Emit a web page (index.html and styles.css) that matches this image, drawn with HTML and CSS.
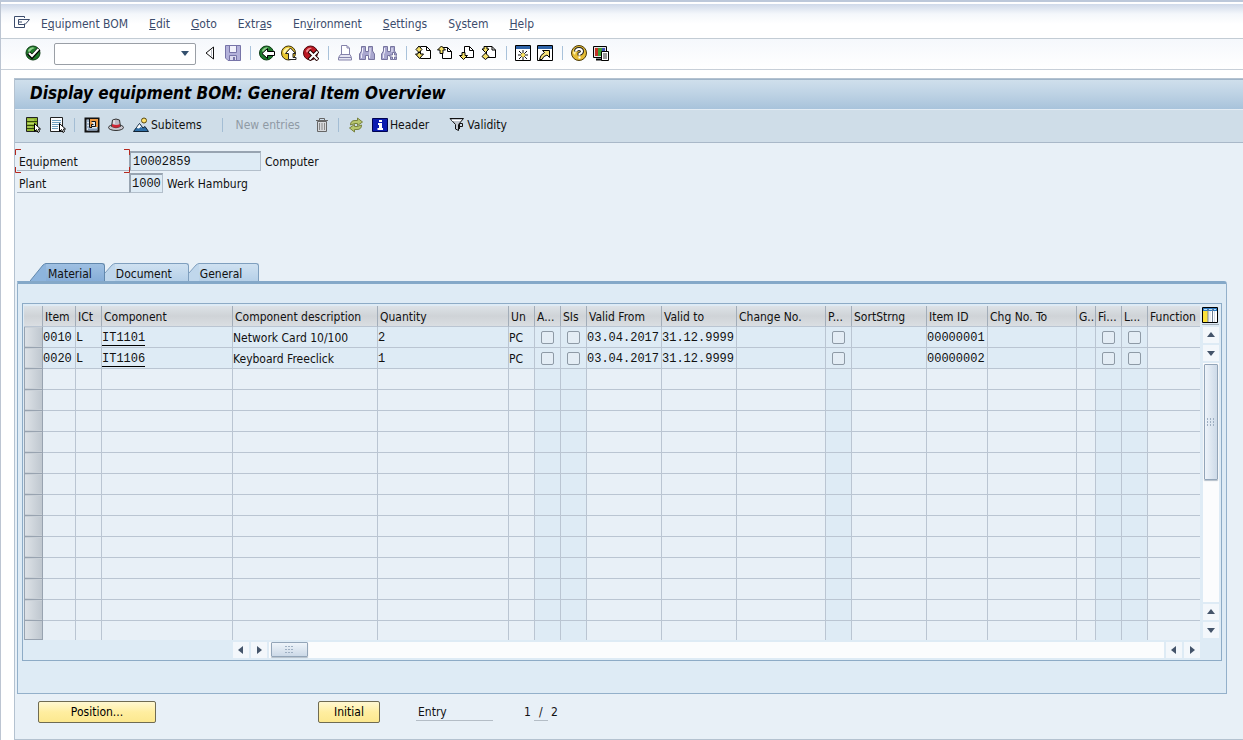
FILE: index.html
```html
<!DOCTYPE html>
<html lang="en">
<head>
<meta charset="utf-8">
<title>Display equipment BOM: General Item Overview</title>
<link rel="stylesheet" href="styles.css">
</head>
<body>
<div class="window">
  <nav class="menubar">
    <button class="icon-btn menu-icon" aria-label="Window menu"><svg class="icon" viewBox="0 0 16 16"><path d="M10.500 4V2.500H.5V13.500H10.500V9.500" fill="none" stroke="#3c4c6c"/><path d="M15.500 5.500H4.500V10.500H11L15.500 5.500M5 8H8" fill="none" stroke="#3c4c6c"/></svg></button>
    <a href="#">E<u>q</u>uipment BOM</a>
    <a href="#"><u>E</u>dit</a>
    <a href="#"><u>G</u>oto</a>
    <a href="#">Extr<u>a</u>s</a>
    <a href="#">En<u>v</u>ironment</a>
    <a href="#"><u>S</u>ettings</a>
    <a href="#">S<u>y</u>stem</a>
    <a href="#"><u>H</u>elp</a>
  </nav>

  <div class="toolbar">
    <button class="icon-btn" aria-label="Enter"><svg class="icon" viewBox="0 0 16 16"><circle cx="8" cy="8" r="7" fill="#1f7a2c" stroke="#0b3a12"/><path d="M3 5Q6 1 10 3Q6 4 4 8Z" fill="#8fd08a"/><path d="M3.500 8L7 11.500L14 4" fill="none" stroke="#000" stroke-width="4"/><path d="M4 8L7 11L13.500 4" fill="none" stroke="#fff" stroke-width="2"/></svg></button>
    <div class="command">
      <input class="command-input" type="text" aria-label="Command field">
      <button class="command-drop" aria-label="Command history"><svg class="drop-icon" viewBox="0 0 10 6"><path d="M1 0H9L5 5Z" fill="#34506e"/></svg></button>
    </div>
    <button class="icon-btn" aria-label="Hide command field"><svg class="icon" viewBox="0 0 16 16"><path d="M10.500 2V14L3 8Z" fill="#fff" stroke="#111"/><path d="M9 4V12L8 11V5Z" fill="#b9bcc4"/></svg></button>
    <button class="icon-btn" aria-label="Save"><svg class="icon" viewBox="0 0 16 16"><path d="M.5.5H15.500V15.500H3L.5 13Z" fill="#b3b1da" stroke="#7774a8"/><path d="M4.500 1V7.500H11.500V1" fill="#f2f2fb" stroke="#7774a8"/><path d="M4.500 15V10.500H11.500V15" fill="#dddcf0" stroke="#7774a8"/><path d="M8 12H10V15H8Z" fill="#7774a8"/></svg></button>
    <span class="sep"></span>
    <button class="icon-btn" aria-label="Back"><svg class="icon" viewBox="0 0 16 16"><circle cx="7.500" cy="8" r="7" fill="#1f7a2c" stroke="#0b3a12"/><path d="M3 5Q6 1 10 3Q6 4 4 8Z" fill="#8fd08a"/><path d="M3 8.500L8.500 3.500V6.500H15.500V10.500H8.500V13.500Z" fill="#fff" stroke="#000"/></svg></button>
    <button class="icon-btn" aria-label="Exit"><svg class="icon" viewBox="0 0 16 16"><circle cx="7.500" cy="8" r="7" fill="#e8c52e" stroke="#3c3008"/><path d="M2 7Q4 2 9 3Q5 5 4 9Z" fill="#fff3a8"/><path d="M9.500 3L14.500 8.500H12V12.500H15V14.500H7.500V8.500H4.500Z" fill="#fff" stroke="#222"/></svg></button>
    <button class="icon-btn" aria-label="Cancel"><svg class="icon" viewBox="0 0 16 16"><circle cx="7.500" cy="8" r="7" fill="#bb1722" stroke="#4d060b"/><path d="M3 6Q5 2 9 3Q6 4 4 8Z" fill="#f08f92"/><path d="M6 6L15 15M15 6L6 15" stroke="#200" stroke-width="4"/><path d="M6.500 6.500L14.500 14.500M14.500 6.500L6.500 14.500" stroke="#fff" stroke-width="2"/></svg></button>
    <span class="sep"></span>
    <button class="icon-btn" aria-label="Print"><svg class="icon" viewBox="0 0 16 16"><path d="M4.500 10V.5H10L12.500 3V10" fill="#fff" stroke="#8583ab"/><path d="M10 1V3H12" fill="none" stroke="#8583ab"/><path d="M3.500 9.500L1.500 12.500V15H14.500V12.500L13 9.500Z" fill="#e6e5f2" stroke="#8583ab"/><path d="M2 12.500H14" stroke="#8583ab"/></svg></button>
    <button class="icon-btn" aria-label="Find"><svg class="icon" viewBox="0 0 16 16"><path d="M2.500 1.500H6.500V6.500H9.500V1.500H13.500V6L15.500 9V14.500H9.500V10.500H6.500V14.500H.5V9L2.500 6Z" fill="#a9a7cf" stroke="#77759f"/><path d="M3.500 3V7L2.500 9.500V13M11 3V7L10.500 13" stroke="#f0effa" fill="none"/></svg></button>
    <button class="icon-btn" aria-label="Find next"><svg class="icon" viewBox="0 0 16 16"><path d="M2.500 1.500H6.500V6.500H9.500V1.500H13.500V6L15.500 9V14.500H9.500V10.500H6.500V14.500H.5V9L2.500 6Z" fill="#a9a7cf" stroke="#77759f"/><path d="M3.500 3V7L2.500 9.500V13M11 3V7" stroke="#f0effa" fill="none"/><path d="M11.500 7.500H13.500V10H16V12H13.500V14.500H11.500V12H9V10H11.500Z" fill="#fff" stroke="#77759f"/></svg></button>
    <span class="sep"></span>
    <button class="icon-btn" aria-label="First page"><svg class="icon" viewBox="0 0 16 16"><path d="M5.500 1.500H11.500L15.500 5.500V13.500H5.500Z" fill="#fff" stroke="#000"/><path d="M11.500 1.500V5.500H15.500" fill="none" stroke="#000"/><path d="M4 1L7 4.500L4 7.500L1 4.500Z" fill="#f3df6a" stroke="#000"/><path d="M3 7.500H5.500V9H8.500L4.500 13.500L.5 9H3Z" fill="#f3df6a" stroke="#000"/></svg></button>
    <button class="icon-btn" aria-label="Previous page"><svg class="icon" viewBox="0 0 16 16"><path d="M5.500 2.500H10.500L14.500 6.500V13.500H5.500Z" fill="#fff" stroke="#000"/><path d="M10.500 2.500V6.500H14.500" fill="none" stroke="#000"/><path d="M4.500 1L8.500 5H6V8.500H3V5H.5Z" fill="#f3df6a" stroke="#000"/></svg></button>
    <button class="icon-btn" aria-label="Next page"><svg class="icon" viewBox="0 0 16 16"><path d="M5.500 1.500H10.500L14.500 5.500V12.500H5.500Z" fill="#fff" stroke="#000"/><path d="M10.500 1.500V5.500H14.500" fill="none" stroke="#000"/><path d="M3 7.500H6V10.500H8.500L4.500 14.500L.5 10.500H3Z" fill="#f3df6a" stroke="#000"/></svg></button>
    <button class="icon-btn" aria-label="Last page"><svg class="icon" viewBox="0 0 16 16"><path d="M5.500 1.500H11L14.500 5V12.500H5.500Z" fill="#fff" stroke="#000"/><path d="M11 1.500V5H14.500" fill="none" stroke="#000"/><path d="M3 1.500H6V4H8L4.500 7.500L1 4H3Z" fill="#f3df6a" stroke="#000"/><path d="M4.500 8L8 11.500L4.500 14.500L1 11.500Z" fill="#f3df6a" stroke="#000"/></svg></button>
    <span class="sep"></span>
    <button class="icon-btn" aria-label="New session"><svg class="icon" viewBox="0 0 16 16"><path d="M.5.5H15.500V15.500H.5Z" fill="#fff" stroke="#000"/><path d="M1 1H15V4H1Z" fill="#2e63a8"/><path d="M8 5V15M3 10H13" stroke="#111"/><path d="M4 6L12 14M12 6L4 14" stroke="#111"/><circle cx="8" cy="10" r="2" fill="#ffe65c"/></svg></button>
    <button class="icon-btn" aria-label="Create shortcut"><svg class="icon" viewBox="0 0 16 16"><path d="M.5.5H15.500V15.500H.5Z" fill="#fff" stroke="#000"/><path d="M1 1H15V4H1Z" fill="#2e63a8"/><path d="M5.500 5.500H12.500V12.500L10 10Q6 11 5 14.500H2.500Q3 10 7.500 7.500Z" fill="#f6e27a" stroke="#000"/></svg></button>
    <span class="sep"></span>
    <button class="icon-btn" aria-label="Help"><svg class="icon" viewBox="0 0 16 16"><circle cx="8" cy="8" r="7.500" fill="#e6bd35" stroke="#4c3a06"/><path d="M2 8Q3 3 8 2Q5 5 4 10Z" fill="#fff2a8"/><path d="M5 6.500Q5 4 8 4T11 6.500Q11 8 8.500 9V10.500" fill="none" stroke="#222" stroke-width="4"/><path d="M5 6.500Q5 4 8 4T11 6.500Q11 8 8.500 9V10.500M8.500 11.500V13.500" fill="none" stroke="#fff" stroke-width="2"/></svg></button>
    <button class="icon-btn" aria-label="Customize local layout"><svg class="icon" viewBox="0 0 16 16"><path d="M.5 1.500H13.500V12.500H.5Z" fill="#e5e5e5" stroke="#000"/><path d="M2 3H5V11H2Z" fill="#c33126"/><path d="M5 3H9V11H5Z" fill="#3c9d35"/><path d="M9 3H12V11H9Z" fill="#3b4fb4"/><path d="M3 14.500H9" stroke="#000" stroke-width="2"/><path d="M8.500 6.500H15.500V15.500H8.500Z" fill="#fff" stroke="#000"/><path d="M10 9H14M10 11H14M10 13H14" stroke="#333"/></svg></button>
  </div>

  <main class="screen">
    <h1 class="title">Display equipment BOM: General Item Overview</h1>

    <div class="appbar">
      <button class="icon-btn" aria-label="Select all"><svg class="icon" viewBox="0 0 16 16"><path d="M1.500.5H12.500V14.500H1.500Z" fill="#8fb52f" stroke="#222"/><path d="M2 4.500H12M2 8.500H12M2 11.500H12" stroke="#34470d"/><path d="M2.500 3H9M2.500 6.500H9M2.500 10H7" stroke="#bfd873"/><path d="M9.500 6.500V14.500L11.500 12.500L13 15.500L14.500 14.500L13.500 12H15.500Z" fill="#fff" stroke="#000"/></svg></button>
      <button class="icon-btn deselect" aria-label="Deselect all"><svg class="icon" viewBox="0 0 16 16"><path d="M.5.5H12.500V14.500H.5Z" fill="#fafcfe" stroke="#222"/><path d="M2 3.500H11M2 5.500H11M2 7.500H10M2 9.500H8M2 11.500H8" stroke="#6e9fbf"/><path d="M9.500 6.500V14.500L11.500 12.500L13 15.500L14.500 14.500L13.500 12H15.500Z" fill="#fff" stroke="#000"/></svg></button>
      <span class="sep"></span>
      <button class="icon-btn" aria-label="Item"><svg class="icon" viewBox="0 0 16 16"><path d="M1.500 1.500H14.500V14.500H1.500Z" fill="#dce7f2" stroke="#111" stroke-width="2"/><path d="M5 2H14V10H5Z" fill="#ed9a45"/><path d="M2.500 4H5M2.500 7H5M2.500 10H5" stroke="#6d8aac"/><path d="M5.500 2V10.500H8" fill="none" stroke="#111"/><path d="M7.500 4.500H11.500V9.500H7.500V7.500H9.500" fill="#dce7f2" stroke="#111"/><path d="M4 12.500H13" stroke="#7f97b4" stroke-width="2"/></svg></button>
      <button class="icon-btn hat-btn" aria-label="Header details"><svg class="icon" viewBox="0 0 16 16"><ellipse cx="8" cy="10.500" rx="7.500" ry="3" fill="#c9c5cd" stroke="#333"/><path d="M3.500 9.500L4.500 3Q8 1 11.500 3L12.500 9.500Q8 12 3.500 9.500Z" fill="#bdb8c3" stroke="#333"/><path d="M4 7Q8 9 12 7V9.500Q8 12 4 9.500Z" fill="#ce2433"/><path d="M6 3V7" stroke="#fff"/></svg></button>
      <button class="text-btn"><svg class="icon" viewBox="0 0 16 16"><circle cx="11" cy="3.500" r="2.500" fill="#ffe16a" stroke="#5a4a12"/><path d="M.5 14.500L6.500 6.500L10 11L12 9.500L15.500 14.500Z" fill="#2e6ea6" stroke="#123"/><path d="M3.500 11L6.500 7L9 11L7.500 10L6 11.500Z" fill="#fff"/></svg>Subitems</button>
      <span class="sep"></span>
      <button class="text-btn muted" disabled>New entries</button>
      <button class="icon-btn" aria-label="Delete" disabled><svg class="icon" viewBox="0 0 16 16"><path d="M2 3.500H14M5.500 3V1.500H10.500V3" fill="none" stroke="#666"/><path d="M3.500 4.500H12.500V14.500H3.500Z" fill="#d7d9dc" stroke="#666"/><path d="M5.500 6V13M8 6V13M10.500 6V13" stroke="#888"/></svg></button>
      <span class="sep"></span>
      <button class="icon-btn refresh" aria-label="Other object"><svg class="icon" viewBox="0 0 16 16"><path d="M2.500 8Q2.500 3.500 7 3.500H9.500V1L14.500 5L9.500 8.500V6.500H7Z" fill="#b8c76c" stroke="#77813e"/><path d="M13.500 8Q13.500 12.500 9 12.500H6.500V15L1.500 11L6.500 7.500V9.500H9Z" fill="#b8c76c" stroke="#77813e"/></svg></button>
      <button class="text-btn"><svg class="icon" viewBox="0 0 16 16"><path d="M.5 1.500H15.500V14.500H.5Z" fill="#0a1bb0" stroke="#000350"/><path d="M7 3H10V5H7ZM6 6H10V11H11V13H5.500V11H7V8H6Z" fill="#fff"/></svg>Header</button>
      <button class="text-btn validity"><svg class="icon" viewBox="0 0 16 16"><path d="M1 1.500H14.500L9.500 7.500V13.500L6.500 12V7.500Z" fill="#c4c9d0" stroke="#111"/><path d="M3 3.500H12" stroke="#fff"/><path d="M10.500 12V6.500H13.500V9.500H11" fill="none" stroke="#111"/></svg>Validity</button>
    </div>

    <form class="fields">
      <div class="field">
        <label for="equipment">Equipment</label>
        <input class="mono wide" id="equipment" type="text" value="10002859" readonly>
        <span>Computer</span>
        <svg class="brackets" viewBox="0 0 115 24"><path d="M6 .5H.5V6M109 .5H114.500V6M.5 18V23.500H6M114.500 18V23.500H109" fill="none" stroke="#b5281e"/></svg>
      </div>
      <div class="field">
        <label for="plant">Plant</label>
        <input class="mono short" id="plant" type="text" value="1000" readonly>
        <span>Werk Hamburg</span>
      </div>
    </form>

    <div class="tabs" role="tablist">
      <button class="tab active" role="tab" aria-selected="true"><svg class="slant-lead" viewBox="0 0 16 18"><path d="M0 18L13 2Q15 .5 16 .5V18Z" fill="#8db4dd"/><path d="M0 18L13 2Q15 .5 16 .5" fill="none" stroke="#6288ad"/></svg><span>Material</span></button>
      <button class="tab" role="tab" aria-selected="false"><svg class="slant" viewBox="0 0 10 18"><path d="M0 10L7 2Q9 .5 10 .5V18H0Z" fill="#c0d7ec"/><path d="M0 10L7 2Q9 .5 10 .5" fill="none" stroke="#7f9fbe"/></svg><span>Document</span></button>
      <button class="tab" role="tab" aria-selected="false"><svg class="slant" viewBox="0 0 10 18"><path d="M0 10L7 2Q9 .5 10 .5V18H0Z" fill="#c0d7ec"/><path d="M0 10L7 2Q9 .5 10 .5" fill="none" stroke="#7f9fbe"/></svg><span>General</span></button>
    </div>

    <section class="panel">
      <div class="grid-frame">
        <div class="grid-main">
          <table class="items">
            <colgroup>
              <col class="w18"><col class="w33"><col class="w26"><col class="w131"><col class="w145"><col class="w131"><col class="w26"><col class="w26"><col class="w26"><col class="w75"><col class="w75"><col class="w89"><col class="w26"><col class="w75"><col class="w61"><col class="w89"><col class="w19"><col class="w26"><col class="w26"><col>
            </colgroup>
            <thead>
              <tr><th class="pick"></th><th>Item</th><th>ICt</th><th>Component</th><th>Component description</th><th>Quantity</th><th>Un</th><th>A...</th><th>SIs</th><th>Valid From</th><th>Valid to</th><th>Change No.</th><th>P...</th><th>SortStrng</th><th>Item ID</th><th>Chg No. To</th><th>G..</th><th>Fi...</th><th>L...</th><th>Function</th></tr>
            </thead>
            <tbody id="rows">
              <tr class="filled"><td class="pick"><button aria-label="Select item 0010"></button></td><td class="mono">0010</td><td class="mono">L</td><td class="mono"><a href="#">IT1101</a></td><td>Network Card 10/100</td><td class="mono">2</td><td>PC</td><td class="flag"><input type="checkbox" aria-label="Assembly"></td><td class="flag"><input type="checkbox" aria-label="Subitems"></td><td class="mono">03.04.2017</td><td class="mono">31.12.9999</td><td></td><td class="flag"><input type="checkbox" aria-label="P"></td><td></td><td class="mono">00000001</td><td></td><td></td><td class="flag"><input type="checkbox" aria-label="Fi"></td><td class="flag"><input type="checkbox" aria-label="L"></td><td class="open"></td></tr>
              <tr class="filled"><td class="pick"><button aria-label="Select item 0020"></button></td><td class="mono">0020</td><td class="mono">L</td><td class="mono"><a href="#">IT1106</a></td><td>Keyboard Freeclick</td><td class="mono">1</td><td>PC</td><td class="flag"><input type="checkbox" aria-label="Assembly"></td><td class="flag"><input type="checkbox" aria-label="Subitems"></td><td class="mono">03.04.2017</td><td class="mono">31.12.9999</td><td></td><td class="flag"><input type="checkbox" aria-label="P"></td><td></td><td class="mono">00000002</td><td></td><td></td><td class="flag"><input type="checkbox" aria-label="Fi"></td><td class="flag"><input type="checkbox" aria-label="L"></td><td class="open"></td></tr>
            </tbody>
          </table>
          <div class="hscroll">
            <div class="arrows"><button class="arrow" aria-label="Scroll left"><svg class="arrow-icon" viewBox="0 0 8 8"><path d="M6 0V8L1 4Z" fill="#44546a"/></svg></button><button class="arrow" aria-label="Scroll right"><svg class="arrow-icon" viewBox="0 0 8 8"><path d="M2 0V8L7 4Z" fill="#44546a"/></svg></button></div>
            <div class="track"><div class="thumb"><svg class="grip-h" viewBox="0 0 9 7"><path d="M0 0H2V1H0ZM3 0H5V1H3ZM6 0H8V1H6ZM0 3H2V4H0ZM3 3H5V4H3ZM6 3H8V4H6ZM0 6H2V7H0ZM3 6H5V7H3ZM6 6H8V7H6Z" fill="#9eafc2"/></svg></div></div>
            <div class="arrows"><button class="arrow" aria-label="Page left"><svg class="arrow-icon" viewBox="0 0 8 8"><path d="M6 0V8L1 4Z" fill="#44546a"/></svg></button><button class="arrow" aria-label="Page right"><svg class="arrow-icon" viewBox="0 0 8 8"><path d="M2 0V8L7 4Z" fill="#44546a"/></svg></button></div>
          </div>
        </div>
        <div class="vscroll">
          <button class="config" aria-label="Configuration"><svg class="icon" viewBox="0 0 16 16"><path d="M.5.5H15.500V15.500H.5Z" fill="#fff" stroke="#000"/><path d="M1 1H15V4H1Z" fill="#2f7bc0"/><path d="M1 4H6V15H1Z" fill="#fbe23c"/><path d="M6 2V15M10.500 2V15" stroke="#6d7f96"/><path d="M8 4V15M12.500 4V15" stroke="#d5dce6"/><path d="M2 2.500H5M7 2.500H10M12 2.500H14" stroke="#bfe0fa"/></svg></button>
          <button class="arrow" aria-label="Scroll up"><svg class="arrow-icon" viewBox="0 0 8 8"><path d="M0 6H8L4 1Z" fill="#44546a"/></svg></button>
          <button class="arrow" aria-label="Scroll down"><svg class="arrow-icon" viewBox="0 0 8 8"><path d="M0 2H8L4 7Z" fill="#44546a"/></svg></button>
          <div class="track"><div class="thumb"><svg class="grip-v" viewBox="0 0 8 9"><path d="M0 0H1V2H0ZM3 0H4V2H3ZM6 0H7V2H6ZM0 3H1V5H0ZM3 3H4V5H3ZM6 3H7V5H6ZM0 6H1V8H0ZM3 6H4V8H3ZM6 6H7V8H6Z" fill="#9eafc2"/></svg></div></div>
          <button class="arrow" aria-label="Page up"><svg class="arrow-icon" viewBox="0 0 8 8"><path d="M0 6H8L4 1Z" fill="#44546a"/></svg></button>
          <button class="arrow" aria-label="Page down"><svg class="arrow-icon" viewBox="0 0 8 8"><path d="M0 2H8L4 7Z" fill="#44546a"/></svg></button>
        </div>
      </div>
    </section>

    <footer class="footer">
      <button class="push position">Position...</button>
      <button class="push initial">Initial</button>
      <span class="entry">Entry</span>
      <span class="count"><span>1</span><span class="slash">/</span><span>2</span></span>
    </footer>
  </main>
</div>
<script src="rows.js"></script>
</body>
</html>
```
FILE: styles.css
```css
* { box-sizing: border-box; }

body {
  margin: 0;
  background: #fff;
  color: #111;
  font: 12px/16px "DejaVu Sans Condensed", Tahoma, "Noto Sans", sans-serif;
}

button, input { font: inherit; color: inherit; }
button { margin: 0; padding: 0; border: 0; background: none; }
a { color: inherit; text-decoration: none; }
svg { display: block; flex: none; }

.mono { font-family: "Liberation Mono", monospace; }
.icon { width: 16px; height: 16px; }
.icon-btn { flex: none; width: 16px; height: 16px; }
.sep { flex: none; width: 1px; height: 14px; background: #a9c2da; }

.window {
  display: flex;
  flex-direction: column;
  min-height: 100vh;
  border-left: 1px solid #bcc5d2;
  border-top: 2px solid #bcc8da;
}

.menubar {
  display: flex;
  align-items: center;
  gap: 21px;
  height: 37px;
  padding: 6px 0 0 13px;
  border-top: 2px solid #fff;
  border-bottom: 1px solid #c3ccd4;
  background: linear-gradient(#cfd9e9, #f4f7fb 10px, #fff 20px);
  color: #3c4c6c;
  white-space: nowrap;
}
.menu-icon { height: 20px; margin-right: -10px; padding-bottom: 4px; }

.toolbar {
  display: flex;
  align-items: center;
  gap: 6px;
  height: 31px;
  padding: 0 0 3px 24px;
  border-bottom: 1px solid #c7cfd8;
  background: linear-gradient(#f5f8fc, #fff);
}
.toolbar .sep { margin: 0 2px 0 3px; }
.command {
  display: flex;
  align-items: center;
  width: 142px;
  height: 22px;
  margin: 2px 1px 0 7px;
  border: 1px solid #9a9fa6;
  border-radius: 2px;
  background: #fff;
}
.command-input { flex: 1; min-width: 0; height: 18px; border: 0; outline: 0; background: none; }
.command-drop { padding: 6px 5px; }
.drop-icon { width: 10px; height: 6px; }

.screen {
  display: flex;
  flex: 1;
  flex-direction: column;
  margin: 8px 0 0 13px;
  border: solid #b4c2d0;
  border-width: 1px 0 1px 1px;
  background: #e8f0f7;
}

.title {
  height: 30px;
  margin: 0;
  padding-left: 15px;
  border-top: 1px solid #9fb4c8;
  background: linear-gradient(#cfdfec, #bdd2e4 50%, #a8c3db);
  color: #000;
  font-size: 17px;
  font-style: italic;
  font-weight: bold;
  line-height: 26px;
}

.appbar {
  display: flex;
  align-items: center;
  height: 34px;
  padding: 0 0 2px 10px;
  border-top: 1px solid #e3ecf4;
  border-bottom: 1px solid #a9b8c8;
  background: #cfdde8;
  white-space: nowrap;
}
.appbar .sep { margin: 0 9px 0 8px; background: #a3bdd4; }
.deselect, .hat-btn { margin-left: 9px; }
.hat-btn { margin: 0 9px 0 8px; }
.text-btn { display: flex; align-items: center; gap: 2px; }
.appbar .text-btn + .sep { margin: 0 13px 0 20px; }
.muted { margin-right: 14px; color: #8f9aa5; }
.refresh { margin-right: 8px; }
.validity { margin-left: 20px; }

.fields { padding: 8px 0 0 2px; }
.field { display: flex; position: relative; align-items: center; height: 20px; margin-bottom: 2px; }
.field label { width: 112px; height: 20px; padding: 3px 2px 0; border-bottom: 1px solid #aab6c3; }
.field span { padding-top: 1px; }
.field input {
  height: 20px;
  margin-right: 4px;
  padding: 0 2px;
  border: 1px solid #b3bfcb;
  border-top: 2px solid #98a4b1;
  border-left: 2px solid #98a4b1;
  border-radius: 0;
  outline: 0;
  background: #deebf5;
}
.field .wide { width: 132px; }
.field .short { width: 34px; padding: 0 1px; }

/* Corner brackets round the focused label */
.brackets {
  position: absolute;
  top: -2px;
  left: -2px;
  width: 115px;
  height: 24px;
  pointer-events: none;
}

.tabs { display: flex; margin-top: 68px; padding-left: 15px; }
.tab { display: flex; height: 18px; }
.tab span {
  height: 18px;
  padding: 2px 16px 0 1px;
  border-top: 1px solid #7f9fbe;
  border-right: 1px solid #7f9fbe;
  border-radius: 0 3px 0 0;
  background: linear-gradient(#cfe1f1, #b6d0e8);
}
.tab.active span { padding: 2px 12px 0 2px; border-color: #6288ad; background: linear-gradient(#9fc0e2, #86add8); }
.slant-lead { width: 16px; height: 18px; }
.slant { width: 10px; height: 18px; }

.panel {
  margin: 0 16px 0 2px;
  padding: 19px 4px 32px;
  border: 1px solid #93b0ca;
  border-top: 3px solid #84a8c8;
  border-radius: 0 3px 0 0;
  background: #deebf5;
}

.grid-frame {
  display: flex;
  gap: 2px;
  padding: 2px 2px 2px 1px;
  border: 1px solid #8dabc6;
}
.grid-main { flex: 1; min-width: 0; }

.items { width: 100%; table-layout: fixed; border-collapse: separate; border-spacing: 0; }
.items th, .items td {
  height: 21px;
  padding: 0;
  overflow: hidden;
  border-right: 1px solid #bac5d2;
  border-bottom: 1px solid #bac5d2;
  text-align: left;
  white-space: nowrap;
}
.items th {
  padding: 2px 0 0 2px;
  border-right-color: #a2adb9;
  background: linear-gradient(#dde2e7, #cfd3d7 50%, #dadee2);
  font-weight: normal;
}
.items td { padding: 2px 0 0; background: #e8f0f7; }
.items .filled td { background: #deebf5; }
.items td.flag { padding: 0; background: #deebf5; text-align: center; }
.items .filled td.open { background: #e8f0f7; }
.items th:last-child, .items td:last-child { border-right: 0; }
.items tr:last-child td { height: 19px; border-bottom: 0; }
.items thead tr:last-child th { height: 21px; }
.items td.pick { padding: 0; background: #c9d0d7; }
.items tbody .pick { border: 1px solid #98a3b0; border-top: 0; }
.items tr:last-child td.pick { border-bottom: 1px solid #98a3b0; }
.pick button { display: block; width: 100%; height: 18px; background: linear-gradient(90deg, #dde2e7, #bfc7cf); }
.items td a { display: inline-block; height: 15px; border-bottom: 1px solid #000; line-height: 15px; }
.items input {
  appearance: none;
  display: block;
  width: 13px;
  height: 13px;
  margin: 0 auto;
  border: 1px solid #8e9aa6;
  border-radius: 2px;
  background: #e4edf5;
}

.w18 { width: 19px; }
.w19 { width: 19px; }
.w26 { width: 26px; }
.w33 { width: 33px; }
.w61 { width: 61px; }
.w75 { width: 75px; }
.w89 { width: 89px; }
.w131 { width: 131px; }
.w145 { width: 145px; }

.arrow {
  display: flex;
  flex: none;
  align-items: center;
  justify-content: center;
  width: 16px;
  height: 16px;
  background: #f3f7fb;
}
.arrow-icon { width: 8px; height: 8px; }
.track { flex: 1; background: #fbfcfd; }
.thumb {
  display: flex;
  align-items: center;
  justify-content: center;
  border: 1px solid #93a5b8;
  border-radius: 1px;
  box-shadow: 0 1px 1px #b4bfca;
}

.hscroll { display: flex; gap: 2px; margin: 2px 0 0 209px; }
.arrows { display: flex; gap: 2px; }
.hscroll .thumb { width: 37px; height: 15px; background: linear-gradient(#eef4fa, #ccd9e7); }
.hscroll .track { padding-left: 2px; }
.grip-h { width: 9px; height: 7px; }

.vscroll { display: flex; flex-direction: column; align-items: center; gap: 2px; width: 17px; padding-bottom: 20px; }
.config { width: 17px; height: 19px; border-bottom: 1px solid #a2adb9; }
.vscroll .track { display: flex; flex-direction: column; width: 16px; padding-top: 1px; }
.vscroll .thumb { width: 14px; height: 116px; margin: 0 auto; background: linear-gradient(90deg, #eef4fa, #cddae8); }
.grip-v { width: 8px; height: 9px; }

.footer { display: flex; align-items: flex-start; padding: 7px 0 0 23px; }
.push {
  height: 22px;
  border: 1px solid #6f6b52;
  border-radius: 2px;
  background: linear-gradient(#fff8d2, #ffeea0 50%, #fce88f);
  color: #000;
}
.position { width: 118px; }
.initial { width: 62px; margin-left: 162px; }
.entry { width: 77px; height: 20px; margin-left: 36px; padding: 3px 2px 0; border-bottom: 1px solid #b4bdc6; }
.count { display: flex; gap: 3px; margin-left: 31px; }
.count span { height: 20px; padding-top: 3px; }
.count .slash { width: 14px; border-bottom: 1px solid #b4bdc6; text-align: center; }
```
FILE: rows.js
```js
// Pads the item table with empty rows up to the visible row count.
const VISIBLE_ROWS = 15;
const FLAG_COLUMNS = [7, 8, 12, 17, 18];
const body = document.getElementById("rows");
const columnCount = body.rows[0].cells.length;

while (body.rows.length < VISIBLE_ROWS) {
  const row = body.insertRow();
  for (let i = 0; i < columnCount; i++) {
    const cell = row.insertCell();
    if (i === 0) {
      cell.className = "pick";
      const button = document.createElement("button");
      button.setAttribute("aria-label", "Select empty row");
      cell.append(button);
    } else if (FLAG_COLUMNS.includes(i)) {
      cell.className = "flag";
    }
  }
}
```
